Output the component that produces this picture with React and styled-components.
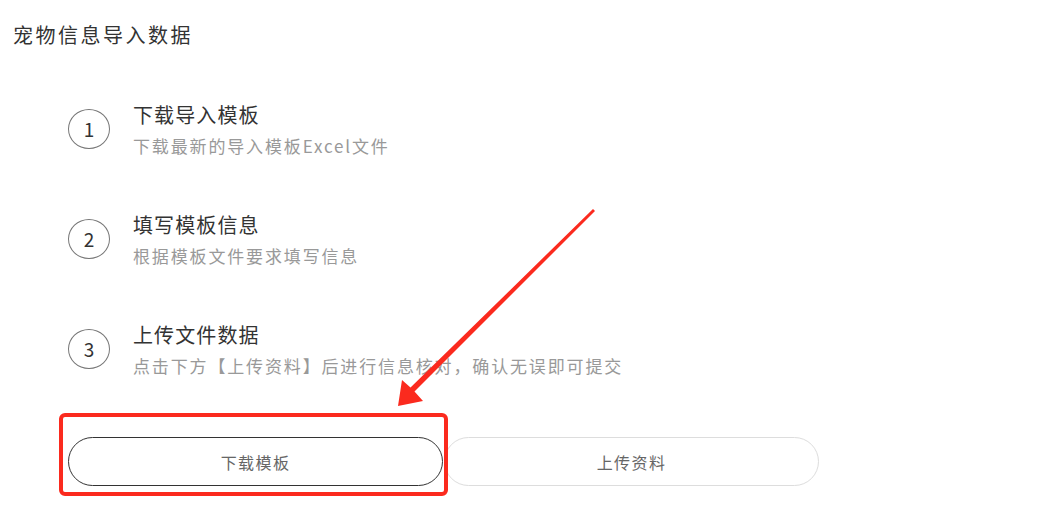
import styled, { createGlobalStyle } from "styled-components";

const GlobalStyle = createGlobalStyle`
  html, body {
    margin: 0;
    padding: 0;
    background: #fff;
  }
  body {
    font-family: "Noto Sans CJK SC", "Noto Sans", sans-serif;
    color: #333;
  }
`;

const Page = styled.div`
  position: relative;
  width: 1056px;
  height: 509px;
  overflow: hidden;
  padding: 21px 0 0 13px;
  box-sizing: border-box;
`;

const Header = styled.h1`
  margin: 0;
  font-size: 20px;
  line-height: 28px;
  font-weight: 400;
  letter-spacing: 2.5px;
  color: #333;
`;

const Steps = styled.div`
  display: flex;
  flex-direction: column;
  gap: 52px;
  margin: 52px 0 0 55px;
`;

const Step = styled.div`
  display: flex;
  align-items: center;
  gap: 23px;
`;

const Circle = styled.div`
  width: 42px;
  height: 40px;
  border: 1px solid #777;
  border-radius: 50%;
  box-sizing: border-box;
  display: flex;
  align-items: center;
  justify-content: center;
  font-size: 19px;
  color: #333;
  flex-shrink: 0;
  margin-top: -3px;
`;

const StepText = styled.div`
  display: flex;
  flex-direction: column;
  gap: 4px;
`;

const StepTitle = styled.div`
  font-size: 20px;
  line-height: 28px;
  letter-spacing: 1.1px;
  color: #333;
`;

const StepDesc = styled.div`
  font-size: 17px;
  line-height: 26px;
  letter-spacing: 1.85px;
  color: #999;
`;

const Buttons = styled.div`
  display: flex;
  gap: 1px;
  margin: 58px 0 0 55px;
`;

const Button = styled.button`
  width: 375px;
  height: 49px;
  border-radius: 25px;
  background: #fff;
  border: 1px solid ${props => (props.active ? "#333" : "#ddd")};
  font-family: inherit;
  font-size: 16px;
  letter-spacing: 1.4px;
  color: #666;
  cursor: pointer;
`;

const Annotation = styled.svg`
  position: absolute;
  left: 0;
  top: 0;
  pointer-events: none;
`;

const steps = [
  { n: 1, title: "下载导入模板", desc: "下载最新的导入模板Excel文件" },
  { n: 2, title: "填写模板信息", desc: "根据模板文件要求填写信息" },
  { n: 3, title: "上传文件数据", desc: "点击下方【上传资料】后进行信息核对，确认无误即可提交" },
];

export default function App() {
  return (
    <>
      <GlobalStyle />
      <Page>
        <Header>宠物信息导入数据</Header>
        <Steps>
          {steps.map(s => (
            <Step key={s.n}>
              <Circle>{s.n}</Circle>
              <StepText>
                <StepTitle>{s.title}</StepTitle>
                <StepDesc>{s.desc}</StepDesc>
              </StepText>
            </Step>
          ))}
        </Steps>
        <Buttons>
          <Button active>下载模板</Button>
          <Button>上传资料</Button>
        </Buttons>
        <Annotation width="1056" height="509" viewBox="0 0 1056 509">
          <rect x="61" y="415" width="385" height="79" rx="4" fill="none" stroke="#fb2a1e" strokeWidth="4" />
          <path d="M398,406 L402,380 L410.5,387.5 L593,209 L595,211 L414.5,391.5 L423,401 Z" fill="#fb2a1e" />
        </Annotation>
      </Page>
    </>
  );
}
